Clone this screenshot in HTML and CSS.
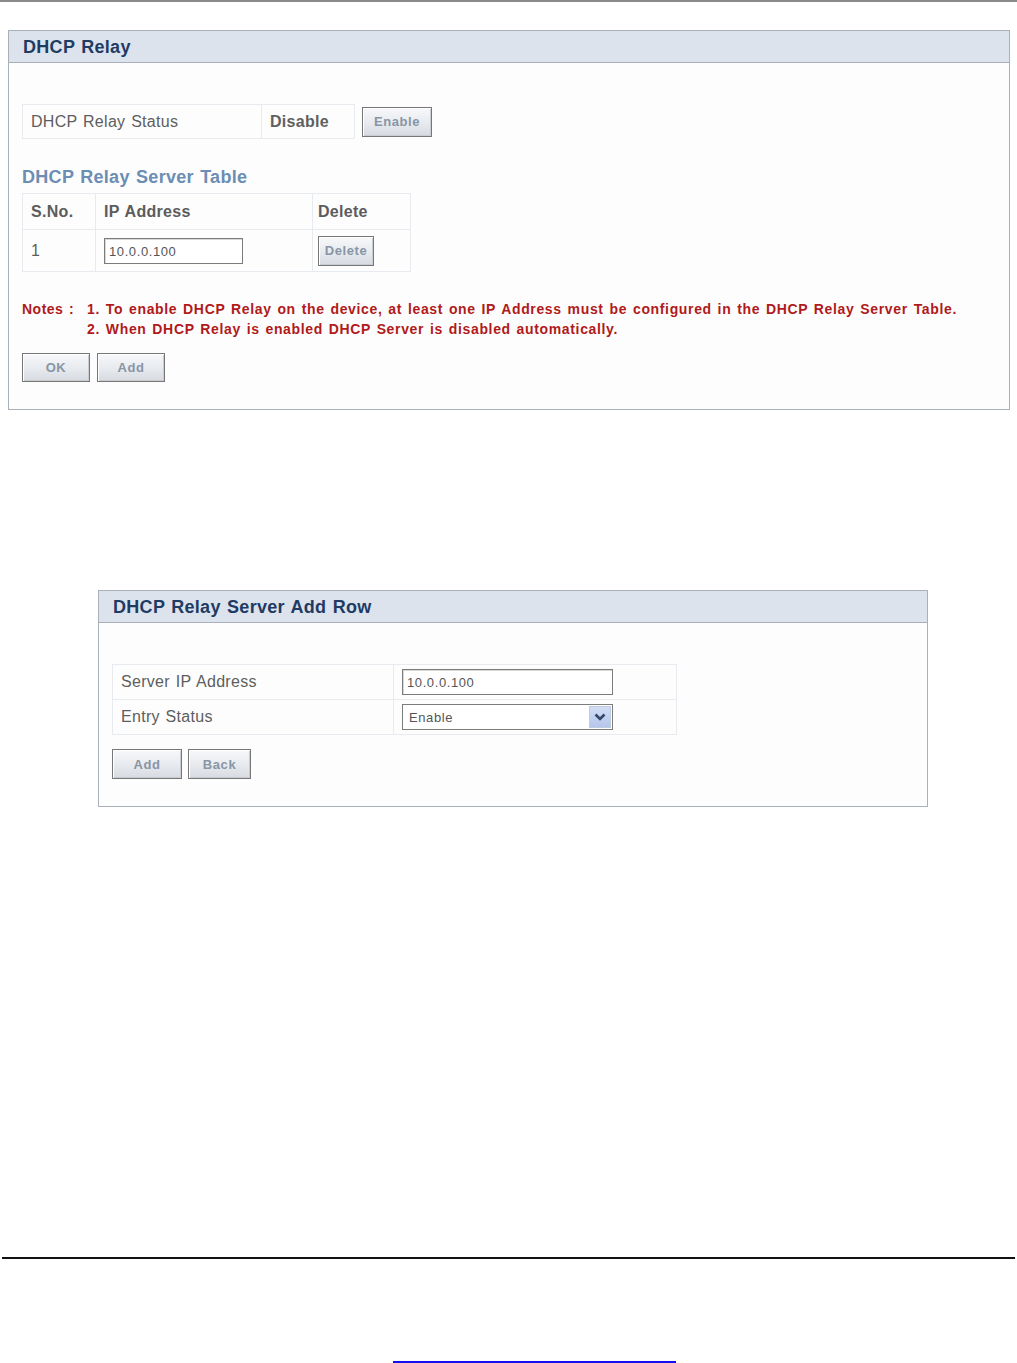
FILE: index.html
```html
<!DOCTYPE html>
<html>
<head>
    <title>DHCP Relay</title>
    <link rel="stylesheet" href="styles.css">
</head>
<body>
    <div class="topline"></div>

    <div class="panel relay">
        <div class="panel-head"><h2>DHCP Relay</h2></div>
        <div class="panel-body">
            <table class="grid status">
                <tr>
                    <td class="label-cell">DHCP Relay Status</td>
                    <td class="value-cell">Disable</td>
                    <td class="bare"><button class="btn btn-enable">Enable</button></td>
                </tr>
            </table>

            <h3 class="subhead">DHCP Relay Server Table</h3>
            <table class="grid servers">
                <tr class="head-row">
                    <td class="col-no">S.No.</td>
                    <td class="col-ip">IP Address</td>
                    <td class="col-del">Delete</td>
                </tr>
                <tr>
                    <td class="col-no">1</td>
                    <td class="col-ip"><div class="textbox small">10.0.0.100</div></td>
                    <td class="col-del"><button class="btn btn-delete">Delete</button></td>
                </tr>
            </table>

            <div class="notes">
                <div class="notes-title">Notes :</div>
                <div class="notes-list">
                    <div>1. To enable DHCP Relay on the device, at least one IP Address must be configured in the DHCP Relay Server Table.</div>
                    <div>2. When DHCP Relay is enabled DHCP Server is disabled automatically.</div>
                </div>
            </div>

            <div class="actions">
                <button class="btn btn-ok">OK</button>
                <button class="btn btn-add">Add</button>
            </div>
        </div>
    </div>

    <div class="panel addrow">
        <div class="panel-head"><h2>DHCP Relay Server Add Row</h2></div>
        <div class="panel-body">
            <table class="grid form">
                <tr>
                    <td class="form-label">Server IP Address</td>
                    <td class="form-field"><div class="textbox wide">10.0.0.100</div></td>
                </tr>
                <tr>
                    <td class="form-label">Entry Status</td>
                    <td class="form-field">
                        <div class="selectbox">
                            <span class="select-text">Enable</span>
                            <span class="select-arrow">
                                <svg width="12" height="8" viewBox="0 0 12 8"><path d="M1.5 1.5 L6 6 L10.5 1.5" fill="none" stroke="#34466a" stroke-width="2.6"/></svg>
                            </span>
                        </div>
                    </td>
                </tr>
            </table>

            <div class="actions">
                <button class="btn btn-add2">Add</button>
                <button class="btn btn-back">Back</button>
            </div>
        </div>
    </div>

    <div class="footline"></div>
    <div class="footlink"><a href="#" class="doc-link"></a></div>
</body>
</html>
```

FILE: styles.css
```css
body {
    margin: 0;
    padding: 0;
    background-color: white;
    font-family: "Liberation Sans", Arial, sans-serif;
    color: #555;
    word-spacing: 1px;
}

.topline {
    height: 2px;
    background-color: #8a8a8a;
}

/* panels */
.panel {
    border: 1px solid #a9b0b8;
    background-color: #fdfdfd;
    box-sizing: border-box;
}

.relay {
    margin: 28px 0 0 8px;
    width: 1002px;
    height: 380px;
}

.addrow {
    margin: 180px 0 0 98px;
    width: 830px;
    height: 217px;
}

.panel-head {
    height: 31px;
    background-color: #dce3ed;
    border-bottom: 1px solid #a9b0b8;
    display: flex;
    align-items: center;
}

.panel-head h2 {
    margin: 0 0 0 14px;
    font-size: 18px;
    font-weight: bold;
    color: #1f3b63;
    padding-top: 1px;
    letter-spacing: 0.3px;
}

.panel-body {
    padding: 41px 13px 0 13px;
}

/* tables */
.grid {
    border-collapse: collapse;
}

.grid td {
    border: 1px solid #e7eaee;
    font-size: 16px;
    color: #5e5e5e;
    padding: 0 8px;
    letter-spacing: 0.3px;
}

.grid td.bare {
    border: none;
    padding: 0 0 0 7px;
}

.status tr {
    height: 34px;
}

.label-cell {
    width: 222px;
}

.value-cell {
    width: 76px;
    font-weight: bold;
    color: #606060 !important;
}

.subhead {
    margin: 28px 0 0 0;
    font-size: 18px;
    font-weight: bold;
    color: #6c8db4;
    height: 21px;
    line-height: 21px;
    letter-spacing: 0.3px;
}

.servers {
    margin-top: 5px;
}

.servers .head-row {
    height: 36px;
}

.servers .head-row td {
    font-weight: bold;
    color: #5c5c5c;
}

.servers tr {
    height: 42px;
}

.col-no {
    width: 56px;
}

.col-ip {
    width: 200px;
}

.col-del {
    width: 84px;
    padding-left: 5px !important;
}

.textbox {
    border: 1px solid #7c7c7c;
    box-shadow: inset 1px 1px 0 #d8d8d8;
    background-color: white;
    height: 24px;
    line-height: 24px;
    font-size: 13px;
    letter-spacing: 0.6px;
    color: #555;
    padding-left: 4px;
    box-sizing: border-box;
}

.textbox.small {
    width: 139px;
    height: 26px;
    line-height: 26px;
}

.textbox.wide {
    width: 211px;
    height: 26px;
    line-height: 26px;
}

/* buttons */
.btn {
    font-family: "Liberation Sans", Arial, sans-serif;
    font-size: 13px;
    font-weight: bold;
    color: #8895a6;
    border: 1px solid #777;
    box-shadow: inset 1px 1px 0 #fff, inset -1px -1px 0 #c9ccd1;
    background: linear-gradient(#f7f8fa, #e8ebef 50%, #d7dbe1);
    padding: 0;
    cursor: pointer;
    letter-spacing: 0.6px;
}

.btn-enable {
    width: 70px;
    height: 30px;
}

.btn-delete {
    width: 56px;
    height: 30px;
}

.btn-ok, .btn-add {
    width: 68px;
    height: 29px;
}

.btn-add2 {
    width: 70px;
    height: 30px;
}

.btn-back {
    width: 63px;
    height: 30px;
}

/* notes */
.notes {
    display: flex;
    margin-top: 27px;
    color: #b01a1a;
    font-size: 14px;
    font-weight: bold;
    line-height: 20px;
    letter-spacing: 0.65px;
    word-spacing: 1.3px;
}

.notes-title {
    width: 65px;
    letter-spacing: 0.5px;
}

.actions {
    display: flex;
    gap: 7px;
    margin-top: 14px;
}

/* add row form */
.form tr {
    height: 35px;
}

.form-label {
    width: 264px;
}

.form-field {
    width: 266px;
}

.selectbox {
    width: 211px;
    height: 26px;
    border: 1px solid #7c7c7c;
    background-color: white;
    box-sizing: border-box;
    display: flex;
    align-items: center;
    justify-content: space-between;
}

.select-text {
    font-size: 13px;
    color: #555;
    padding-left: 6px;
    letter-spacing: 0.6px;
}

.select-arrow {
    width: 22px;
    height: 22px;
    margin-right: 1px;
    background: linear-gradient(#d2ddf5, #b4c6ec);
    border: 1px solid #c0ccdf;
    box-sizing: border-box;
    display: flex;
    align-items: center;
    justify-content: center;
}

.addrow .actions {
    margin-top: 14px;
    gap: 6px;
}

/* footer */
.footline {
    margin: 450px 2px 0 2px;
    height: 2px;
    background-color: #111;
}

.footlink {
    margin-top: 102px;
    padding-left: 393px;
}

.doc-link {
    display: block;
    width: 283px;
    height: 0;
    border-bottom: 2px solid #1010f0;
}
```
